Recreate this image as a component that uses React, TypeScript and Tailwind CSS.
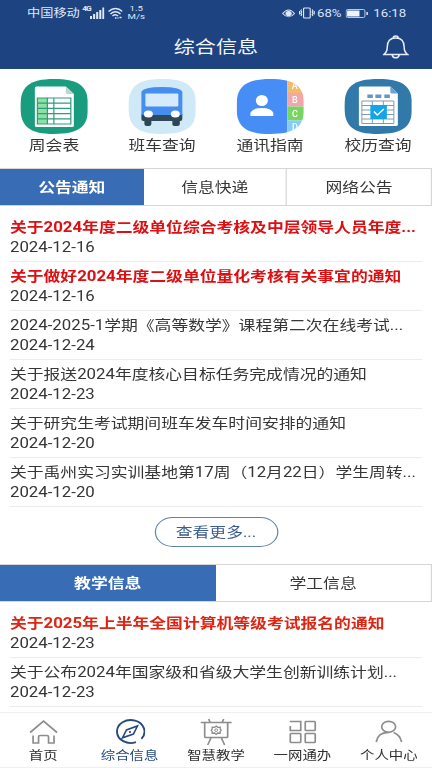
import React from 'react';

const shortcuts = [
  { title: '周会表', icon: SheetIcon },
  { title: '班车查询', icon: BusIcon },
  { title: '通讯指南', icon: ContactsIcon },
  { title: '校历查询', icon: CalendarIcon },
];

const notices = [
  { title: '关于2024年度二级单位综合考核及中层领导人员年度...', date: '2024-12-16', color: 'font-bold text-[#dc0f12]' },
  { title: '关于做好2024年度二级单位量化考核有关事宜的通知', date: '2024-12-16', color: 'font-bold text-[#dc0f12]' },
  { title: '2024-2025-1学期《高等数学》课程第二次在线考试...', date: '2024-12-24' },
  { title: '关于报送2024年度核心目标任务完成情况的通知', date: '2024-12-23' },
  { title: '关于研究生考试期间班车发车时间安排的通知', date: '2024-12-20' },
  { title: '关于禹州实习实训基地第17周（12月22日）学生周转...', date: '2024-12-20' },
];

const teaching = [
  { title: '关于2025年上半年全国计算机等级考试报名的通知', date: '2024-12-23', color: 'font-bold text-[#de2413]' },
  { title: '关于公布2024年国家级和省级大学生创新训练计划...', date: '2024-12-23' },
];

const navItems = [
  { title: '首页', icon: HomeIcon },
  { title: '综合信息', icon: CompassIcon, active: true },
  { title: '智慧教学', icon: BoardIcon },
  { title: '一网通办', icon: GridIcon },
  { title: '个人中心', icon: UserIcon },
];

const squircle = 'M34 0C60 0 68 8 68 27.500S60 55 34 55 0 47 0 27.500 8 0 34 0Z';

function SheetIcon() {
  return (
    <svg viewBox="0 0 68 55" preserveAspectRatio="none" className="h-[55px] w-[56.6px]">
      <path d={squircle} fill="#1a9d7e" />
      <path d="M16 7.500H45.500L53.500 15V46.500Q53.500 48 52 48H16Q14.500 48 14.500 46.500V9Q14.500 7.500 16 7.500Z" fill="#fff" />
      <path d="M45.500 7.500L53.500 15H47Q45.500 15 45.500 13.500Z" fill="#c3d3d2" />
      <path d="M17 19H27V45H17Z" fill="#8fe0a5" />
      <path d="M17 19H50.500V45H17ZM17 24.200H50.500M17 29.400H50.500M17 34.600H50.500M17 39.800H50.500M27 19V45M33.500 19V45" fill="none" stroke="#2f9d78" strokeWidth="1.200" />
    </svg>
  );
}

function BusIcon() {
  return (
    <svg viewBox="0 0 68 55" preserveAspectRatio="none" className="h-[55px] w-[56.6px]">
      <path d={squircle} fill="#d0e9f7" />
      <path d="M16 41H23V45Q23 47 20.500 47H18.500Q16 47 16 45ZM44 41H51.500V45Q51.500 47 49 47H47Q44 47 44 45Z" fill="#2b4656" />
      <path d="M13 35H54V40Q54 42 52 42H15Q13 42 13 40Z" fill="#30495a" />
      <path d="M13 13Q15 8 33.500 8T54 13V36H13Z" fill="#468df0" />
      <rect x="17" y="14.500" width="33" height="13" rx="1" fill="#d5eafa" />
      <ellipse cx="20" cy="35" rx="4.500" ry="3.500" fill="#fff" />
      <ellipse cx="47" cy="35" rx="4.500" ry="3.500" fill="#fff" />
    </svg>
  );
}

function ContactsIcon() {
  return (
    <svg viewBox="0 0 68 55" preserveAspectRatio="none" className="h-[55px] w-[56.6px]">
      <clipPath id="contacts">
        <path d={squircle} />
      </clipPath>
      <g clipPath="url(#contacts)">
        <path d="M0 0H51V55H0Z" fill="#468df5" />
        <path d="M51 0H68V14H51Z" fill="#f3bb6a" />
        <path d="M51 14H68V27.500H51Z" fill="#f3a6a9" />
        <path d="M51 27.500H68V41.500H51Z" fill="#79d562" />
        <path d="M51 41.500H68V55H51Z" fill="#85cdf3" />
        <g fill="#fff" fontSize="9" fontFamily="Roboto, sans-serif" fontWeight="500" textAnchor="middle">
          <text x="58.500" y="10.500">A</text>
          <text x="58.500" y="24">B</text>
          <text x="58.500" y="38">C</text>
          <text x="58.500" y="51.500">D</text>
        </g>
      </g>
      <ellipse cx="25.500" cy="21.500" rx="6" ry="5.500" fill="#fff" />
      <path d="M14 37V34Q16 29 25.500 29T37 34V37Z" fill="#fff" />
    </svg>
  );
}

function CalendarIcon() {
  return (
    <svg viewBox="0 0 68 55" preserveAspectRatio="none" className="h-[55px] w-[56.6px]">
      <path d={squircle} fill="#3079a8" />
      <path d="M16 7.500H46L53.500 14.500V45.500Q53.500 47 52 47H16Q14.500 47 14.500 45.500V9Q14.500 7.500 16 7.500Z" fill="#fff" />
      <path d="M46 7.500L53.500 14.500H47.500Q46 14.500 46 13Z" fill="#6fa2d0" />
      <path d="M23 15.500H28.500V19H23ZM31 15.500H37V19H31ZM40 15.500H45.500V19H40Z" fill="#6597c0" />
      <path d="M17.500 22H49.500V44.500H17.500ZM17.500 26.500H49.500M17.500 31H49.500M17.500 35.500H49.500M17.500 40H49.500M28 22V44.500M39 22V44.500" fill="none" stroke="#7d9bb3" />
      <rect x="26" y="26" width="16.500" height="14" fill="#12a5e8" />
      <path d="M29.500 32.500L33 36L39.500 30" fill="none" stroke="#fff" strokeWidth="1.500" />
    </svg>
  );
}

function HomeIcon() {
  return (
    <svg viewBox="0 0 32 26" preserveAspectRatio="none" className="h-[26px] w-[26.6px]" fill="none" stroke="currentColor" strokeWidth="1.700">
      <path d="M2.500 13.500L16 2L29.500 13.500M5.500 16.500V24H11V18Q11 16.500 12.500 16.500H19.500Q21 16.500 21 18V24H26.500V16.500" />
    </svg>
  );
}

function CompassIcon() {
  return (
    <svg viewBox="0 0 32 26" preserveAspectRatio="none" className="h-[26px] w-[26.6px]" fill="none" stroke="currentColor" strokeWidth="1.900">
      <path d="M22 23.200A13.800 11.500 0 1 1 27.500 19.800" />
      <path d="M8.500 18.800L12.500 11L23.500 7L19.500 15Z" strokeWidth="1.600" />
      <ellipse cx="16" cy="13" rx="1.200" ry="1" fill="currentColor" stroke="none" />
    </svg>
  );
}

function BoardIcon() {
  return (
    <svg viewBox="0 0 34 28" preserveAspectRatio="none" className="h-[28px] w-[28.3px]" fill="none" stroke="currentColor" strokeWidth="1.700">
      <path d="M1.500 4.500H32.500M5.500 4.500V18.500Q5.500 19.500 6.500 19.500H27.500Q28.500 19.500 28.500 18.500V4.500M9.500 1L11 4.500M24.500 1L23 4.500M12 19.500L8.500 27M22 19.500L25.500 27" />
      <path d="M17 8L18.500 9.300L21 9.200V11L22 12.200L21 13.400V15.200L18.500 15L17 16.400L15.500 15L13 15.200V13.400L12 12.200L13 11V9.200L15.500 9.300Z" strokeWidth="1.300" />
      <ellipse cx="17" cy="12.200" rx="1.500" ry="1.300" strokeWidth="1" />
    </svg>
  );
}

function GridIcon() {
  return (
    <svg viewBox="0 0 32 26" preserveAspectRatio="none" className="h-[26px] w-[26.6px]" fill="none" stroke="currentColor" strokeWidth="1.700">
      <path d="M3.500 7V11.500H14V2.500H3" />
      <rect x="18.500" y="2.500" width="10" height="9" rx="0.800" />
      <rect x="3.500" y="14.500" width="10.500" height="9" rx="0.800" />
      <rect x="18.500" y="14.500" width="10" height="9" rx="0.800" />
    </svg>
  );
}

function UserIcon() {
  return (
    <svg viewBox="0 0 32 26" preserveAspectRatio="none" className="h-[26px] w-[26.6px]" fill="none" stroke="currentColor" strokeWidth="1.700">
      <ellipse cx="15.500" cy="7.800" rx="7" ry="5.500" />
      <path d="M3 23Q4.500 13.500 15 13.300M20.500 13.500Q27 16 28.500 23" />
    </svg>
  );
}

function StatusBar() {
  return (
    <div className="flex h-[26px] items-center pl-[22.5px] pr-[21.5px] text-[11px] leading-none text-[#dfe8f7]">
      <span className="w-[45px] whitespace-nowrap">中国移动</span>
      <span className="-mt-[8px] ml-[1px] w-[7px] text-[7px] font-bold tracking-[-0.8px]">4G</span>
      <svg viewBox="0 0 14 12" preserveAspectRatio="none" className="-ml-[0.5px] h-[12px] w-[12px]" fill="currentColor">
        <path d="M0 9H2V12H0ZM3 7H5V12H3ZM6 5H8V12H6ZM9 3H11V12H9ZM12 0.500H14V12H12Z" />
      </svg>
      <svg viewBox="0 0 15 12" preserveAspectRatio="none" className="ml-[2.5px] h-[12px] w-[12.5px]" fill="none" stroke="currentColor" strokeWidth="1.500">
        <path d="M0.500 4.500Q7.500 -1.500 14.500 4.500M2.500 7Q7.500 2.500 12.500 7M4.500 9Q7.500 6.500 10 9" />
        <path d="M7 11H8.500M9.500 11H10.500M11.500 10.500H13.500" />
      </svg>
      <span className="ml-[3.5px] flex w-[16px] flex-col items-center text-[8px] leading-[8.5px]">
        <span>1.5</span>
        <span>M/s</span>
      </span>
      <svg viewBox="0 0 14 10" preserveAspectRatio="none" className="ml-auto h-[9px] w-[11px]" fill="none" stroke="currentColor" strokeWidth="1.100">
        <path d="M0.700 5Q7 -3 13.300 5Q7 12.500 0.700 5Z" />
        <ellipse cx="7" cy="5" rx="2.800" ry="2.300" fill="currentColor" />
      </svg>
      <svg viewBox="0 0 17 12" preserveAspectRatio="none" className="ml-[3.5px] h-[12px] w-[13.5px]" fill="none" stroke="currentColor" strokeWidth="1.200">
        <rect x="5" y="1" width="7" height="10" rx="1" />
        <path d="M3 2.500L2.200 3.800L3 5L2.200 6.300L3 7.500L2.200 9M14 2.500L14.800 3.800L14 5L14.800 6.300L14 7.500L14.800 9M0.800 4V7.500M16.200 4V7.500" />
      </svg>
      <span className="ml-[1.5px]">68%</span>
      <svg viewBox="0 0 23 9" preserveAspectRatio="none" className="ml-[3.5px] h-[9px] w-[19px]">
        <rect x="0.500" y="0.500" width="19" height="8" rx="1.500" fill="none" stroke="#b9c9e6" />
        <path d="M1.500 1.500H14V7.500H1.500Z" fill="#eef3fc" />
        <path d="M21 3H22.500V6H21Z" fill="#dfe8f7" />
      </svg>
      <span className="ml-[4px]">16:18</span>
    </div>
  );
}

function NewsList({ items }: { items: { title: string; date: string; color?: string }[] }) {
  return (
    <ul className="px-[8.3px]">
      {items.map((item) => (
        <li key={item.title} className="h-[49px] border-b border-[#ececec] pt-[4px] leading-5">
          <p className={`whitespace-nowrap ${item.color ?? ''}`}>{item.title}</p>
          <p>{item.date}</p>
        </li>
      ))}
    </ul>
  );
}

function App() {
  return (
    <div className="h-[768px] w-[432px] overflow-hidden bg-white">
      {/* 360dp layout stretched to the window width */}
      <div className="flex h-full w-[360px] origin-top-left scale-x-120 flex-col font-[Roboto,'Noto_Sans_CJK_SC',sans-serif] text-sm text-[#363636]">
        <header className="h-[69px] shrink-0 bg-[#1e4381]">
          <StatusBar />
          <div className="grid h-[43px] grid-cols-3 items-center">
            <h1 className="col-start-2 text-center text-[17.6px] leading-none text-[#f2f6fd]">综合信息</h1>
            <svg viewBox="0 0 26 24" preserveAspectRatio="none" className="-mt-[2px] mr-[19.5px] h-[24px] w-[21.5px] justify-self-end" fill="none" stroke="#e6edf9" strokeWidth="1.500">
              <path d="M10.500 3Q10.500 1 13 1T15.500 3M1 19.500Q4.500 17 4.500 12Q4.500 3 13 3T21.500 12Q21.500 17 25 19.500ZM9.500 20Q10 22.800 13 22.800T16.500 20" />
            </svg>
          </div>
        </header>

        <section className="grid h-[99px] shrink-0 grid-cols-4 pt-[10px]">
          {shortcuts.map((item) => (
            <div key={item.title} className="flex flex-col items-center">
              <item.icon />
              <span className="mt-[1px] leading-5">{item.title}</span>
            </div>
          ))}
        </section>

        <div className="grid h-[38px] shrink-0 grid-cols-3 border border-l-0 border-[#d6d6d6] text-center leading-[36px]">
          <div className="bg-[#386cb5] font-bold text-white">公告通知</div>
          <div className="border-r border-[#d6d6d6]">信息快递</div>
          <div>网络公告</div>
        </div>
        <div className="shrink-0 pt-[7px]">
          <NewsList items={notices} />
        </div>

        <button className="mt-[10px] h-[30px] w-[103px] shrink-0 self-center rounded-full border border-[#5f83ad] leading-[27px] text-[#3b5d8e]">
          查看更多...
        </button>

        <div className="mt-[17px] grid h-[38px] shrink-0 grid-cols-2 border border-l-0 border-[#d6d6d6] text-center leading-[36px]">
          <div className="bg-[#386cb5] font-bold text-white">教学信息</div>
          <div>学工信息</div>
        </div>
        <div className="h-[110px] shrink-0 pt-[7px]">
          <NewsList items={teaching} />
        </div>

        <nav className="grid h-[56px] shrink-0 grid-cols-5 border-y border-[#f0f0f0] bg-white pt-[5px] text-xs text-[#2e2e2e]">
          {navItems.map((item) => (
            <div key={item.title} className={item.active ? 'flex flex-col items-center text-[#264a80]' : 'flex flex-col items-center'}>
              <span className={item.active ? 'flex h-[27px] items-center' : 'flex h-[27px] items-center text-[#8d8d8d]'}>
                <item.icon />
              </span>
              <span className="mt-[2px] leading-[18px]">{item.title}</span>
            </div>
          ))}
        </nav>
      </div>
    </div>
  );
}

export default App;
